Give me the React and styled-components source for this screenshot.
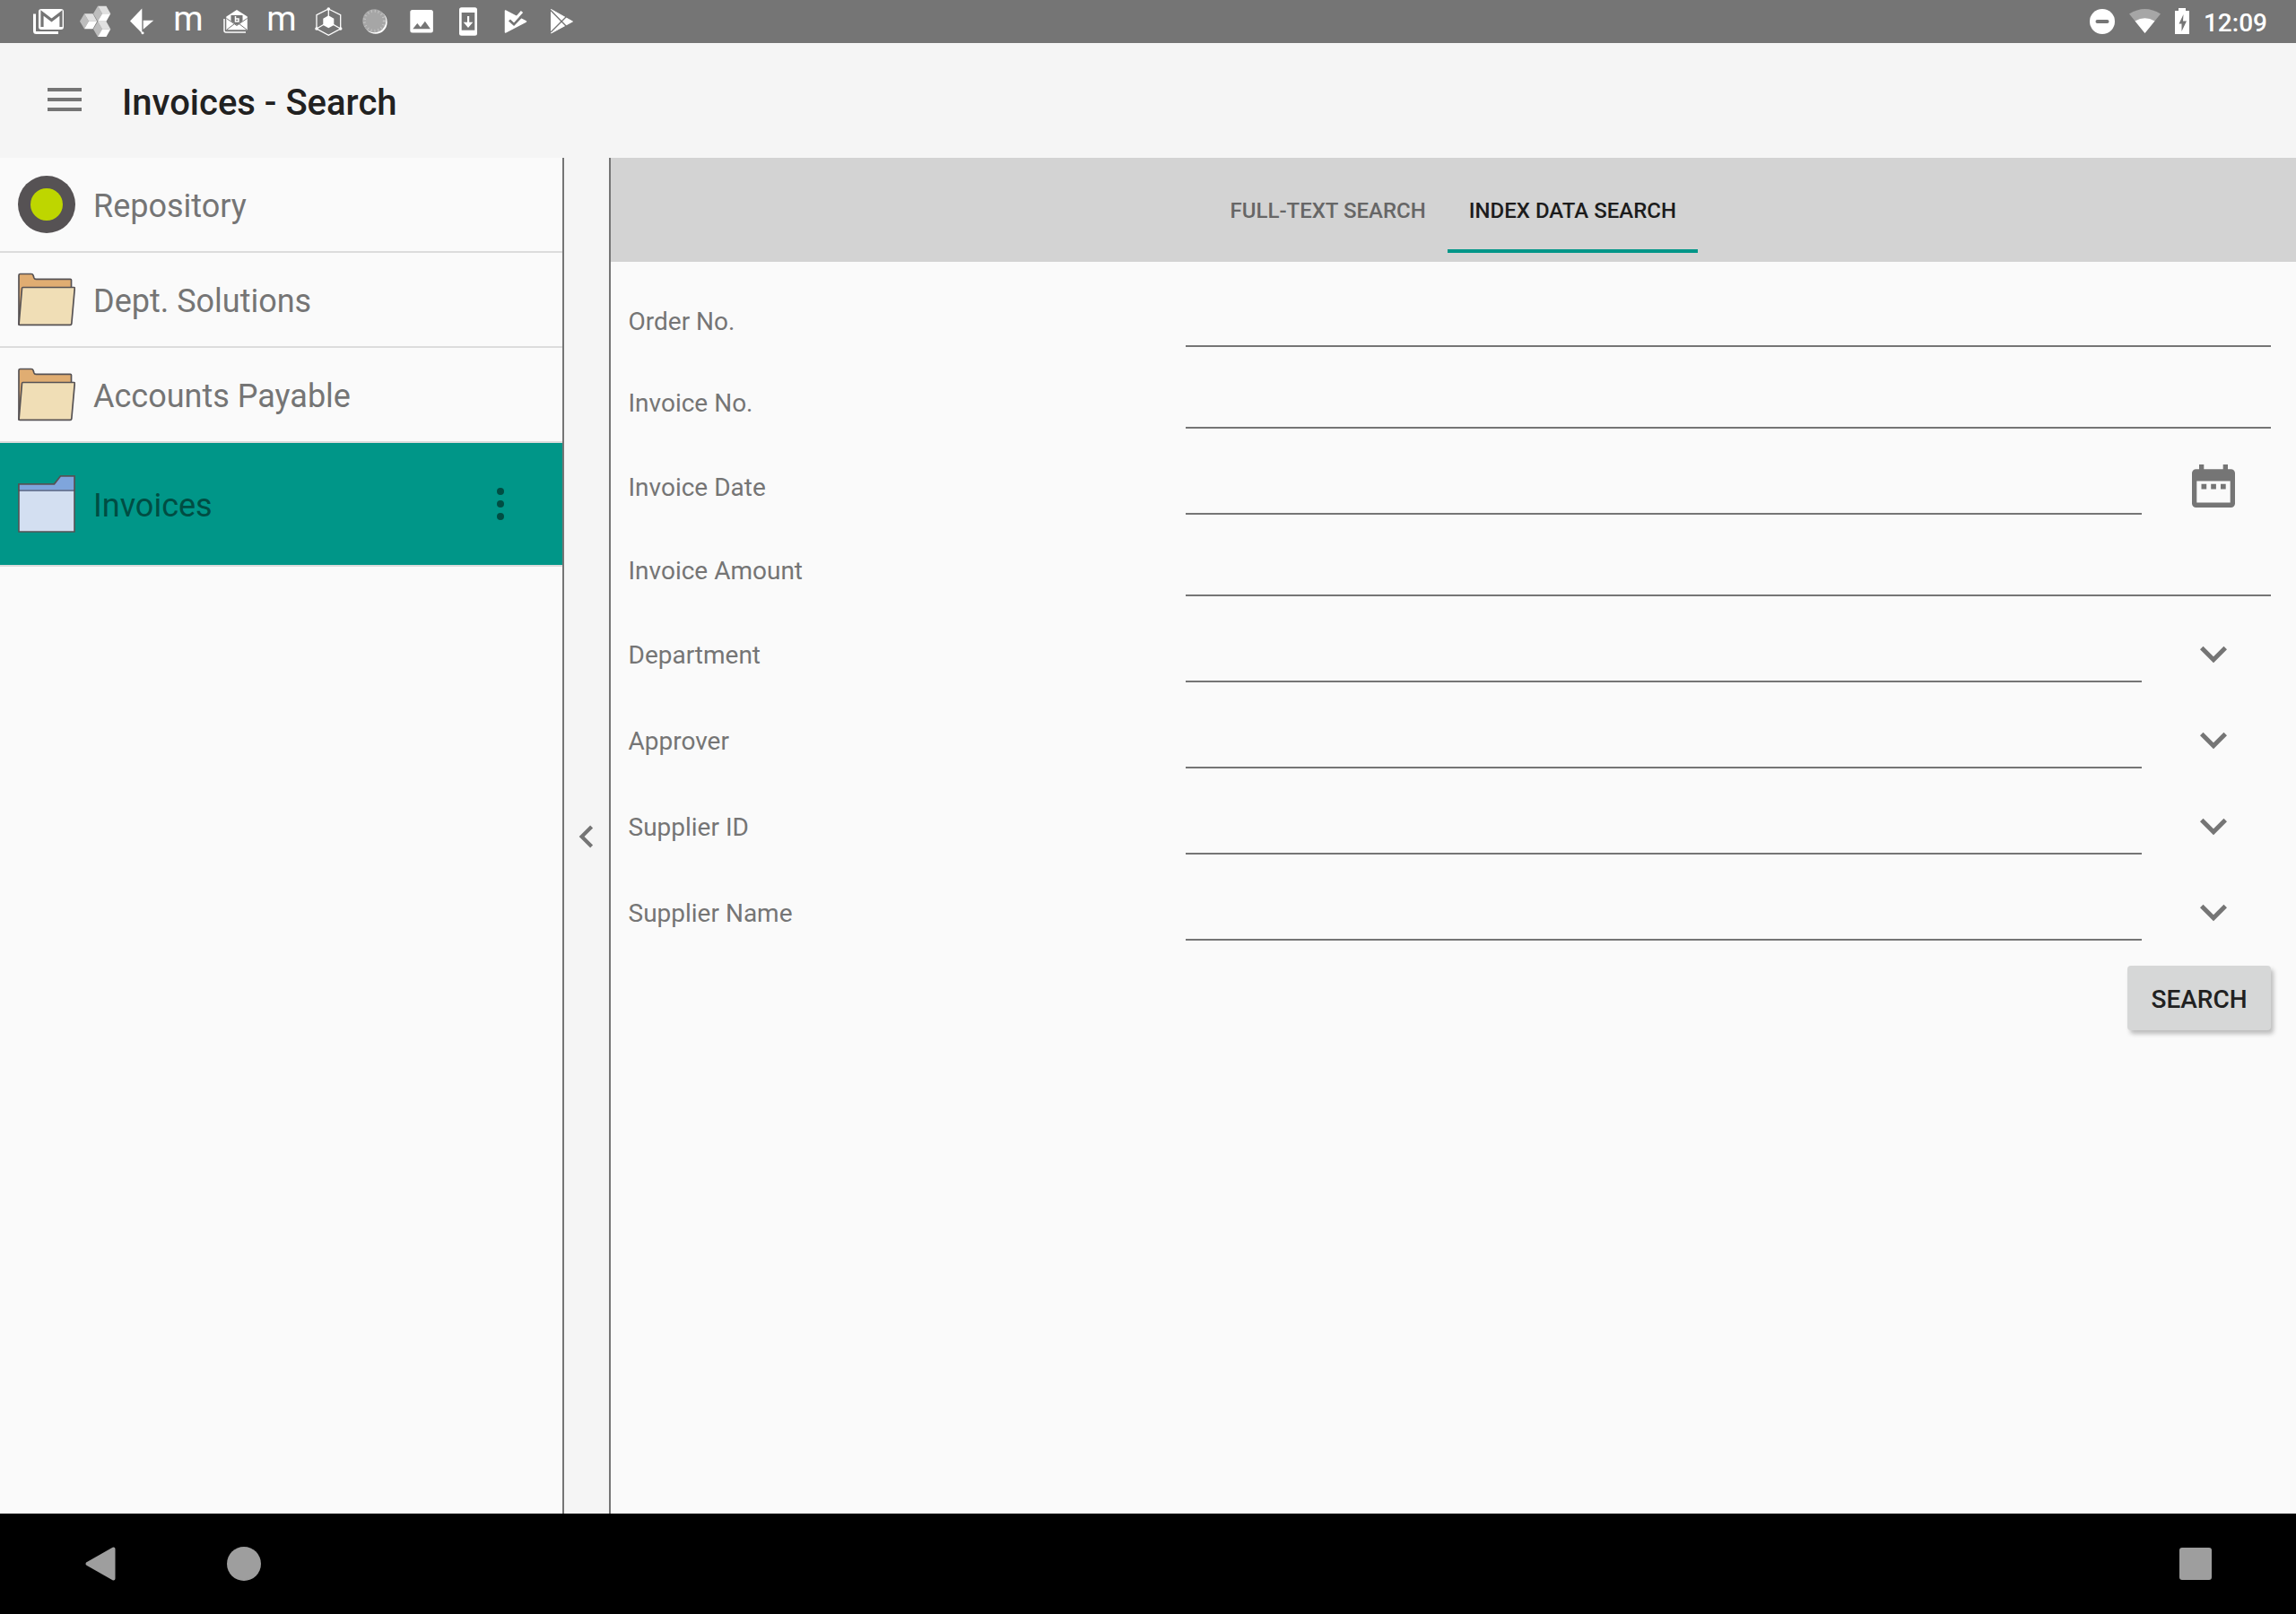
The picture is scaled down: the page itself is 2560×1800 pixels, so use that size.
import React, { useState } from "react";
import styled, { createGlobalStyle } from "styled-components";

const folders = [
  { name: "Repository", icon: "repository" },
  { name: "Dept. Solutions", icon: "folder" },
  { name: "Accounts Payable", icon: "folder" },
  { name: "Invoices", icon: "cabinet", selected: true },
];

const fields = [
  { id: "order-no", label: "Order No.", type: "text" },
  { id: "invoice-no", label: "Invoice No.", type: "text" },
  { id: "invoice-date", label: "Invoice Date", type: "date" },
  { id: "invoice-amount", label: "Invoice Amount", type: "text" },
  { id: "department", label: "Department", type: "select" },
  { id: "approver", label: "Approver", type: "select" },
  { id: "supplier-id", label: "Supplier ID", type: "select" },
  { id: "supplier-name", label: "Supplier Name", type: "select" },
];

const tabs = ["FULL-TEXT SEARCH", "INDEX DATA SEARCH"];

const App = () => {
  const [activeTab, setActiveTab] = useState(1);

  return (
    <Screen>
      <GlobalStyle />
      <StatusBar />
      <AppBar>
        <MenuButton type="button" aria-label="Menu">
          <svg width="40" height="32" viewBox="0 0 40 32" fill="#757575">
            <path d="M1 1h38v4H1zM1 12h38v4H1zM1 23h38v4H1z" />
          </svg>
        </MenuButton>
        <Title>Invoices - Search</Title>
      </AppBar>

      <Content>
        <Sidebar>
          {folders.map((folder) => (
            <FolderItem key={folder.name} $selected={folder.selected}>
              <FolderLink href="#" $selected={folder.selected}>
                <FolderIcon kind={folder.icon} />
                <FolderName>{folder.name}</FolderName>
              </FolderLink>
              {folder.selected && (
                <MoreButton type="button" aria-label="More options">
                  <svg width="12" height="40" viewBox="0 0 12 40" fill="#004d43">
                    <circle cx="5" cy="6" r="4" />
                    <circle cx="5" cy="20" r="4" />
                    <circle cx="5" cy="34" r="4" />
                  </svg>
                </MoreButton>
              )}
            </FolderItem>
          ))}
        </Sidebar>

        <Collapse type="button" aria-label="Collapse folder list">
          <svg width="50" height="50" viewBox="0 0 24 24" fill="#757575">
            <path d="M15.41 7.41L14 6l-6 6 6 6 1.41-1.41L10.83 12z" />
          </svg>
        </Collapse>

        <Main>
          <TabBar role="tablist">
            {tabs.map((tab, i) => (
              <Tab
                key={tab}
                type="button"
                role="tab"
                aria-selected={i === activeTab}
                $active={i === activeTab}
                onClick={() => setActiveTab(i)}
              >
                {tab}
              </Tab>
            ))}
          </TabBar>

          <Form onSubmit={(e) => e.preventDefault()}>
            {fields.map((field) => (
              <FieldRow key={field.id} $tall={field.type !== "text"}>
                <Label htmlFor={field.id}>{field.label}</Label>
                <Control>
                  {field.type === "select" ? (
                    <Select id={field.id}>
                      <option></option>
                    </Select>
                  ) : (
                    <Input id={field.id} type="text" />
                  )}
                  {field.type === "date" && (
                    <CalendarButton type="button" aria-label="Pick a date">
                      <CalendarIcon />
                    </CalendarButton>
                  )}
                  {field.type === "select" && (
                    <Chevron>
                      <svg width="60" height="60" viewBox="0 0 24 24" fill="#757575">
                        <path d="M16.59 8.29L12 12.87 7.41 8.29 6 9.7l6 6 6-6z" />
                      </svg>
                    </Chevron>
                  )}
                </Control>
              </FieldRow>
            ))}
            <SearchButton type="submit">SEARCH</SearchButton>
          </Form>
        </Main>
      </Content>

      <NavBar>
        <NavButton type="button" aria-label="Back">
          <svg
            width="40"
            height="40"
            viewBox="0 0 40 40"
            fill="#9e9e9e"
            stroke="#9e9e9e"
            strokeWidth="4"
            strokeLinejoin="round"
          >
            <path d="M5.5 20L34.5 3.500V36.500z" />
          </svg>
        </NavButton>
        <NavButton type="button" aria-label="Home">
          <svg width="40" height="40" viewBox="0 0 40 40">
            <circle cx="20" cy="20" r="19" fill="#9e9e9e" />
          </svg>
        </NavButton>
        <NavSpace />
        <NavButton type="button" aria-label="Recent apps">
          <svg width="40" height="40" viewBox="0 0 40 40">
            <rect x="2" y="2" width="36" height="36" rx="3" fill="#9e9e9e" />
          </svg>
        </NavButton>
      </NavBar>
    </Screen>
  );
};

const StatusBar = () => (
  <StatusRow>
    <StatusGroup $gap={12}>
      <StatusIcon>
        <path d="M4.5 15.5V34.5a2 2 0 0 0 2 2H31" fill="none" stroke="#fff" strokeWidth="3" />
        <rect x="9" y="10" width="28" height="23" rx="3" />
        <path d="M13 30V14.5l10.5 8 10.5-8V30" fill="none" stroke="#757575" strokeWidth="3.2" />
      </StatusIcon>
      <StatusIcon>
        <Cube x={18} y={6.8} />
        <Cube x={3} y={15.3} />
        <Cube x={18} y={24} />
      </StatusIcon>
      <StatusIcon>
        <path d="M7 23.5L20.3 9.5V37z" />
        <path d="M21.7 22.7h11.6L21.7 32.7z" />
        <circle cx="21" cy="36.7" r="1.5" />
      </StatusIcon>
      <StatusIcon>
        <Letter x="20" y="34">m</Letter>
      </StatusIcon>
      <StatusIcon>
        <path d="M8 21v13a2 2 0 0 0 2 2h22" fill="none" stroke="#fff" strokeWidth="1.5" />
        <path d="M10.3 18.5L22 11l11.8 7.5v14.8H10.3z" />
        <path d="M15.5 17h13v6.5L22 28l-6.5-4.5z" fill="#757575" />
        <path
          d="M10.5 20.5L22 28.5l11.5-8M11 33l8.5-6.5M33 33l-8.5-6.5"
          fill="none"
          stroke="#757575"
          strokeWidth="1"
        />
        <path d="M20.5 18v6h3.5v-3h-3.5" fill="none" stroke="#fff" strokeWidth="1.5" />
      </StatusIcon>
      <StatusIcon>
        <Letter x="20" y="34">m</Letter>
      </StatusIcon>
      <StatusIcon>
        <path
          d="M20.3 10L33.7 16.7V32L20.3 39.2L7 32V16.7zM20.3 10V24.3L33.7 32M20.3 24.3L7 32"
          fill="none"
          stroke="#fff"
          strokeWidth="1.3"
        />
        <path d="M20.3 17.3l6 3.4v7.2l-6 3.4-6-3.4v-7.2z" />
        <circle cx="20.3" cy="10" r="1.8" />
        <circle cx="7" cy="32" r="1.8" />
        <circle cx="33.7" cy="32" r="1.8" />
      </StatusIcon>
      <StatusIcon>
        <circle cx="20.7" cy="24.7" r="13" />
        <circle cx="19.3" cy="23.3" r="13" fill="#a6a6a6" />
        <circle
          cx="19.3"
          cy="23.3"
          r="11"
          fill="none"
          stroke="#c4c4c4"
          strokeWidth="3"
          strokeDasharray="1 3"
        />
      </StatusIcon>
      <StatusIcon>
        <rect x="7.3" y="11" width="25.6" height="25.6" rx="2.5" />
        <path d="M10.3 32.3l5-6.3 3.6 4.3 5-6.6 6 8.6z" fill="#757575" />
      </StatusIcon>
      <StatusIcon>
        <rect x="10" y="8.3" width="20" height="31.4" rx="2.5" />
        <path d="M12.7 14H27.3V33.7H12.7z" fill="#757575" />
        <path d="M19 18h2.2v6.7h4.1L20 31l-5.3-6.3H19z" />
      </StatusIcon>
      <StatusIcon>
        <path d="M9.5 12L32.5 24L9.5 36z" stroke="#fff" strokeWidth="1.5" strokeLinejoin="round" />
        <path d="M14 22.5l5 4.5L30.5 15" fill="none" stroke="#757575" strokeWidth="3" />
        <path d="M16.5 20.5l2.5 2.5 9-10" fill="none" stroke="#fff" strokeWidth="3" />
      </StatusIcon>
      <StatusIcon>
        <path d="M8.5 10.5L32.5 24L8.5 37z" stroke="#fff" strokeWidth="1" strokeLinejoin="round" />
        <path d="M8 11.5L28 32M8 36L28 16" fill="none" stroke="#757575" strokeWidth="1.4" />
      </StatusIcon>
    </StatusGroup>

    <StatusGroup $gap={8}>
      <StatusIcon>
        <circle cx="19" cy="24" r="14" />
        <rect x="11.5" y="22" width="15" height="4" rx="2" fill="#757575" />
      </StatusIcon>
      <StatusIcon>
        <path d="M1 15.5Q18.5 4.5 36 15.5L18.5 37z" fill="#a6a6a6" />
        <path d="M7.5 23.5Q18.5 17 29.5 23.5L18.5 37z" />
      </StatusIcon>
      <svg width="28" height="48" viewBox="0 0 28 48" fill="#fff">
        <path d="M8 9h8v3h4v26H4V12h4z" />
        <path d="M13.5 16L8.5 26.5h3V35l5.5-11.5h-4z" fill="#757575" />
      </svg>
      <Clock>12:09</Clock>
    </StatusGroup>
  </StatusRow>
);

const StatusIcon = ({ children }) => (
  <svg width="40" height="48" viewBox="0 0 40 48" fill="#fff">
    {children}
  </svg>
);

const Cube = ({ x, y }) => (
  <g transform={`translate(${x} ${y})`}>
    <path d="M0 8.5L5 0l5 8.5L5 17z" fill="#bdbdbd" />
    <path d="M5 0h9.5l4.8 8.5H10z" fill="#e0e0e0" />
    <path d="M5 17h9.5l4.8-8.5H10z" fill="#fff" />
  </g>
);

const FolderIcon = ({ kind }) => {
  if (kind === "repository") {
    return (
      <svg width="64" height="64" viewBox="0 0 64 64">
        <circle cx="32" cy="32" r="32" fill="#565254" />
        <circle cx="32" cy="32" r="18" fill="#bed600" />
      </svg>
    );
  }
  if (kind === "cabinet") {
    return (
      <svg width="64" height="64" viewBox="0 0 64 64" stroke="#565254" strokeWidth="1.6">
        <path d="M1 63V10H40.5L47.5 1H63V63z" fill="#d3dff1" />
        <path d="M1 17V10H40.5L47.5 1H63V17z" fill="#7fa5dc" />
        <path d="M2 17H62" stroke="#6d7b9b" strokeWidth="2" />
      </svg>
    );
  }
  return (
    <svg
      width="64"
      height="64"
      viewBox="0 0 64 64"
      stroke="#565254"
      strokeWidth="1.7"
      strokeLinejoin="round"
    >
      <path
        d="M1 60V5q0-1.5 1.5-1.5H15q1.5 0 2 1.5l1 3q.5 1.3 2 1.3H58.5q1 0 1 1V20L56 60z"
        fill="#e0ad72"
      />
      <path
        d="M5.5 18.5H62.5q.8 0 .8 1L59.8 59q-.2 1.3-1.5 1.3H2q-1 0-.9-1L4.5 19.5q.1-1 1-1z"
        fill="#f0deb6"
      />
    </svg>
  );
};

const CalendarIcon = () => (
  <svg width="48" height="50" viewBox="0 0 48 50" fill="#757575">
    <path d="M8 0h5.3v5.3h21.4V0H40v5.3h3.5A4.5 4.5 0 0 1 48 9.8v33.7A4.5 4.5 0 0 1 43.5 48h-39A4.5 4.5 0 0 1 0 43.5V9.8a4.5 4.5 0 0 1 4.5-4.5H8zM5.3 18.5v24h37.4v-24z" />
    <path d="M10.5 21.7h5.7v5.7h-5.7zM21.2 21.7h5.7v5.7h-5.7zM32 21.7h5.7v5.7H32z" />
  </svg>
);

const GlobalStyle = createGlobalStyle`
  * {
    box-sizing: border-box;
  }

  body {
    margin: 0;
    background: #fafafa;
    font-family: Roboto, sans-serif;
  }

  button,
  input,
  select {
    padding: 0;
    border: 0;
    border-radius: 0;
    background: none;
    color: inherit;
    font-family: inherit;
  }

  button {
    cursor: pointer;
  }

  svg {
    display: block;
    flex-shrink: 0;
  }
`;

const Screen = styled.div`
  display: flex;
  flex-direction: column;
  min-height: 100vh;
`;

const StatusRow = styled.div`
  display: flex;
  justify-content: space-between;
  height: 48px;
  padding: 0 32px 0 34px;
  background: #757575;
`;

const StatusGroup = styled.div`
  display: flex;
  align-items: center;
  gap: ${(props) => props.$gap}px;
`;

const Letter = styled.text`
  font-family: Roboto, sans-serif;
  font-size: 38px;
  font-weight: 400;
  text-anchor: middle;
`;

const Clock = styled.span`
  padding-top: 2px;
  color: #fff;
  font-size: 28px;
  font-weight: 500;
`;

const AppBar = styled.header`
  display: flex;
  align-items: center;
  gap: 16px;
  height: 128px;
  padding: 2px 24px 0;
  background: #f5f5f5;
`;

const MenuButton = styled.button`
  display: flex;
  justify-content: center;
  align-items: center;
  width: 96px;
  height: 96px;
`;

const Title = styled.h1`
  margin: 0;
  padding-top: 2px;
  color: #212121;
  font-size: 40px;
  font-weight: 500;
`;

const Content = styled.div`
  display: grid;
  grid-template-columns: minmax(0, 1fr) 54px minmax(0, 3fr);
  flex: 1;
`;

const Sidebar = styled.ul`
  margin: 0;
  padding: 0;
  list-style: none;
`;

const FolderItem = styled.li`
  display: flex;
  align-items: center;
  height: ${(props) => (props.$selected ? 138 : 106)}px;
  padding: 0 20px;
  border-bottom: 2px solid #dcdcdc;
  background: ${(props) => (props.$selected ? "#009688" : "#fafafa")};
`;

const FolderLink = styled.a`
  display: flex;
  flex: 1;
  align-items: center;
  gap: 20px;
  color: ${(props) => (props.$selected ? "#004d43" : "#757575")};
  font-size: 36px;
  text-decoration: none;
`;

const FolderName = styled.span`
  padding-top: 4px;
`;

const MoreButton = styled.button`
  display: flex;
  justify-content: center;
  align-items: center;
  width: 96px;
  height: 96px;
`;

const Collapse = styled.button`
  display: flex;
  justify-content: center;
  align-items: center;
  padding-top: 2px;
  border: solid #757575;
  border-width: 0 2px;
  background: #f5f5f5;
`;

const Main = styled.main`
  background: #fafafa;
`;

const TabBar = styled.div`
  display: flex;
  justify-content: center;
  padding: 10px 0;
  background: #d3d3d3;
`;

const Tab = styled.button`
  height: 96px;
  padding: 2px 24px 0;
  border: solid transparent;
  border-width: 4px 0;
  border-bottom-color: ${(props) => (props.$active ? "#009688" : "transparent")};
  color: ${(props) => (props.$active ? "#1c1c1c" : "#666")};
  font-size: 24px;
  font-weight: 500;
`;

const Form = styled.form`
  display: flex;
  flex-direction: column;
  padding: 21px 20px 0;
`;

const FieldRow = styled.div`
  display: grid;
  grid-template-columns: 1fr 2fr;
  align-items: center;
  height: ${(props) => (props.$tall ? 96 : 91)}px;
`;

const Label = styled.label`
  color: #757575;
  font-size: 28px;
`;

const Control = styled.div`
  display: flex;
  align-items: center;
  gap: 16px;
  height: 100%;
  padding: 0 8px;
`;

const Input = styled.input`
  flex: 1;
  align-self: flex-end;
  min-width: 0;
  height: 60px;
  margin-bottom: 17px;
  border-bottom: 2px solid #757575;
  color: #212121;
  font-size: 28px;
  outline: none;
`;

const Select = styled(Input).attrs({ as: "select" })`
  appearance: none;
`;

const CalendarButton = styled.button`
  display: flex;
  justify-content: center;
  align-items: center;
  width: 128px;
  height: 96px;
`;

const Chevron = styled.span`
  display: flex;
  justify-content: center;
  width: 128px;
`;

const SearchButton = styled.button`
  align-self: flex-end;
  min-width: 160px;
  height: 72px;
  margin: 11px 8px 24px;
  padding: 2px 24px 0;
  border-radius: 4px;
  background: #d6d7d7;
  box-shadow: 3px 4px 5px rgba(0, 0, 0, 0.25);
  color: #212121;
  font-size: 28px;
  font-weight: 500;
`;

const NavBar = styled.nav`
  display: flex;
  height: 112px;
  padding: 0 32px;
  background: #000;
`;

const NavButton = styled.button`
  display: flex;
  justify-content: center;
  align-items: center;
  width: 160px;
`;

const NavSpace = styled.div`
  flex: 1;
`;

export default App;
